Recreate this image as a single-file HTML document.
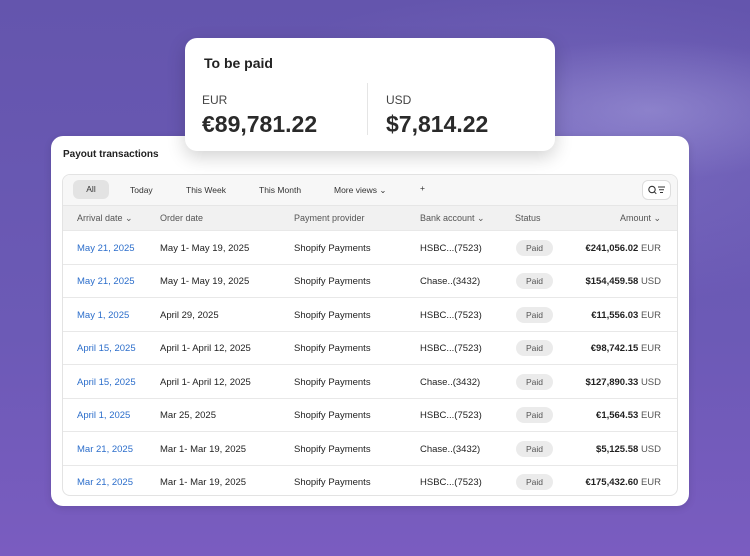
<!DOCTYPE html><html><head><style>
*{margin:0;padding:0;box-sizing:border-box}
body{width:750px;height:556px;overflow:hidden;font-family:"Liberation Sans",sans-serif;position:relative;
background:radial-gradient(ellipse 200px 70px at 650px 110px,rgba(180,175,230,.4),transparent),radial-gradient(ellipse 380px 160px at 560px 150px,rgba(150,140,215,.35),transparent),linear-gradient(180deg,#6455ad 0%,#6c5ab6 60%,#7a5cc0 100%)}
.card{position:absolute;left:51px;top:136px;width:638px;height:370px;background:#fff;border-radius:12px;box-shadow:0 2px 8px rgba(0,0,0,.12)}
.title{position:absolute;left:12px;top:13px;font-size:10px;font-weight:bold;color:#222}
.tbl{position:absolute;left:11px;top:38px;width:616px;height:322px;border:1px solid #e3e3e3;border-radius:8px;overflow:hidden}
.tabs{height:30px;background:#f7f7f7;position:relative;font-size:8.5px;color:#333}
.tabs span{position:absolute;top:10px}
.all{position:absolute;left:10px;top:5px;width:36px;height:19px;background:#e3e3e3;border-radius:6px;text-align:center;line-height:19px}
.srch{position:absolute;right:6px;top:5px;width:29px;height:20px;background:#fff;border:1px solid #ddd;border-radius:6px}
.hdr{height:25px;background:#f1f1f1;position:relative;font-size:9px;color:#555;border-top:1px solid #e6e6e6}
.hdr span,.row span{position:absolute}
.hdr span{top:7px}
.row{height:33.5px;position:relative;border-top:1px solid #e8e8e8;font-size:9.5px;color:#222}
.row span{top:11.5px}
.row .d{color:#2c6ecb}
.pill{left:453px;top:8.5px!important;width:37px;height:16px;background:#ebebeb;border-radius:8px;text-align:center;line-height:16px;font-size:8.5px;color:#555}
.amt{right:16px;font-weight:bold;text-align:right}
.amt i{font-style:normal;font-weight:normal;color:#555}
.top{position:absolute;left:185px;top:38px;width:370px;height:113px;background:#fff;border-radius:12px;box-shadow:0 6px 18px rgba(0,0,0,.18)}
.top .t{position:absolute;left:19px;top:17px;font-size:14px;font-weight:bold;color:#222}
.top .c{position:absolute;top:55px;font-size:12px;color:#444}
.top .v{position:absolute;top:73px;font-size:23px;font-weight:bold;color:#2a2a2a}
.top .div{position:absolute;left:182px;top:45px;width:1px;height:52px;background:#e5e5e5}
</style></head><body>
<div class="card">
<div class="title">Payout transactions</div>
<div class="tbl">
<div class="tabs"><div class="all">All</div><span style="left:67px">Today</span><span style="left:123px">This Week</span><span style="left:196px">This Month</span><span style="left:271px">More views ⌄</span><span style="left:357px;top:8px">+</span>
<div class="srch"><svg width="27" height="18" viewBox="0 0 27 18"><circle cx="9" cy="8.5" r="3.2" fill="none" stroke="#333" stroke-width="1.1"/><path d="M11.3 10.8l2 2M15 6h7M16 8.8h5M17 11.5h3" stroke="#333" stroke-width="1" fill="none"/></svg></div></div>
<div class="hdr"><span style="left:14px">Arrival date ⌄</span><span style="left:97px">Order date</span><span style="left:231px">Payment provider</span><span style="left:357px">Bank account ⌄</span><span style="left:452px">Status</span><span style="right:16px">Amount ⌄</span></div>
<div class="row"><span class="d" style="left:14px">May 21, 2025</span><span style="left:97px">May 1- May 19, 2025</span><span style="left:231px">Shopify Payments</span><span style="left:357px">HSBC...(7523)</span><span class="pill">Paid</span><span class="amt">€241,056.02 <i>EUR</i></span></div>
<div class="row"><span class="d" style="left:14px">May 21, 2025</span><span style="left:97px">May 1- May 19, 2025</span><span style="left:231px">Shopify Payments</span><span style="left:357px">Chase..(3432)</span><span class="pill">Paid</span><span class="amt">$154,459.58 <i>USD</i></span></div>
<div class="row"><span class="d" style="left:14px">May 1, 2025</span><span style="left:97px">April 29, 2025</span><span style="left:231px">Shopify Payments</span><span style="left:357px">HSBC...(7523)</span><span class="pill">Paid</span><span class="amt">€11,556.03 <i>EUR</i></span></div>
<div class="row"><span class="d" style="left:14px">April 15, 2025</span><span style="left:97px">April 1- April 12, 2025</span><span style="left:231px">Shopify Payments</span><span style="left:357px">HSBC...(7523)</span><span class="pill">Paid</span><span class="amt">€98,742.15 <i>EUR</i></span></div>
<div class="row"><span class="d" style="left:14px">April 15, 2025</span><span style="left:97px">April 1- April 12, 2025</span><span style="left:231px">Shopify Payments</span><span style="left:357px">Chase..(3432)</span><span class="pill">Paid</span><span class="amt">$127,890.33 <i>USD</i></span></div>
<div class="row"><span class="d" style="left:14px">April 1, 2025</span><span style="left:97px">Mar 25, 2025</span><span style="left:231px">Shopify Payments</span><span style="left:357px">HSBC...(7523)</span><span class="pill">Paid</span><span class="amt">€1,564.53 <i>EUR</i></span></div>
<div class="row"><span class="d" style="left:14px">Mar 21, 2025</span><span style="left:97px">Mar 1- Mar 19, 2025</span><span style="left:231px">Shopify Payments</span><span style="left:357px">Chase..(3432)</span><span class="pill">Paid</span><span class="amt">$5,125.58 <i>USD</i></span></div>
<div class="row"><span class="d" style="left:14px">Mar 21, 2025</span><span style="left:97px">Mar 1- Mar 19, 2025</span><span style="left:231px">Shopify Payments</span><span style="left:357px">HSBC...(7523)</span><span class="pill">Paid</span><span class="amt">€175,432.60 <i>EUR</i></span></div>
</div></div>
<div class="top"><div class="t">To be paid</div><div class="c" style="left:17px">EUR</div><div class="v" style="left:17px">€89,781.22</div><div class="div"></div><div class="c" style="left:201px">USD</div><div class="v" style="left:201px">$7,814.22</div></div>
</body></html>
